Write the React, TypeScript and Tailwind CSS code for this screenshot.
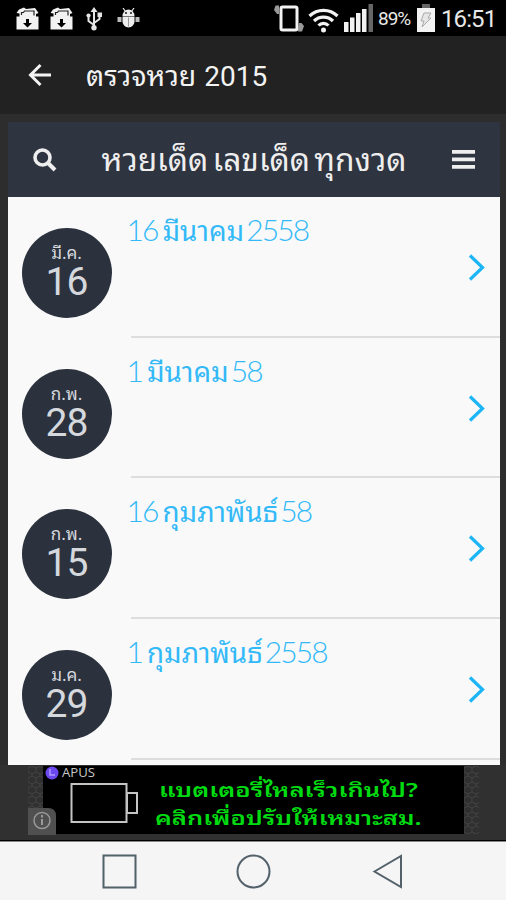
const draws = [
  { month: "มี.ค.", day: "16", before: "16", name: "มีนาคม", year: "2558" },
  { month: "ก.พ.", day: "28", before: "1", name: "มีนาคม", year: "58" },
  { month: "ก.พ.", day: "15", before: "16", name: "กุมภาพันธ์", year: "58" },
  { month: "ม.ค.", day: "29", before: "1", name: "กุมภาพันธ์", year: "2558" },
];

function BoxIcon() {
  return (
    <svg width="23" height="24" viewBox="0 0 23 24" fill="#f2f2f2">
      <path d="M.5 6 3 2.500 8 .500l2 1.500 9-1 3.500 5-2.500 1v3H3.500V6.500z" />
      <path d="M5.500 8V5.500h2l1-1.500h9.500v4.500" fill="none" stroke="#222" strokeWidth="1.200" />
      <path d="M.5 9.500h22v13H.5z" />
      <path d="M10 12h3v4h3l-4.500 4.500L7 16h3z" fill="#000" />
    </svg>
  );
}

function UsbIcon() {
  return (
    <svg width="16" height="24" viewBox="0 0 16 24" fill="none" stroke="#e6e6e6" strokeWidth="2">
      <path d="M8 4v16M8 18 2.500 14V9M8 16l5.500-4V8" />
      <path d="m8 0 3.500 5h-7z" fill="#e6e6e6" stroke="none" />
      <circle cx="8" cy="20.800" r="2.700" fill="#e6e6e6" stroke="none" />
      <circle cx="2.500" cy="8.500" r="2.100" fill="#e6e6e6" stroke="none" />
      <path d="M11.500 5.500H16V10h-4.500z" fill="#e6e6e6" stroke="none" />
    </svg>
  );
}

function DebugIcon() {
  return (
    <svg width="23" height="20" viewBox="0 0 23 20" fill="#eee">
      <path d="M5.500 8a6 6.500 0 0 1 12 0z" />
      <path d="m6 0 2.500 3.500M17 0l-2.500 3.500" stroke="#eee" strokeWidth="1.200" />
      <path d="M5.500 8.500h12v5c0 3-3 6-6 6s-6-3-6-6z" />
      <path d="M.5 9h4v5h-4zM18.500 9h4v5h-4z" fill="#bbb" />
      <path d="M11.500 9.500v9" stroke="#999" strokeWidth="1" />
      <circle cx="9" cy="5" r=".9" fill="#000" />
      <circle cx="14" cy="5" r=".9" fill="#000" />
    </svg>
  );
}

function StatusBar() {
  return (
    <div className="flex h-9 items-start justify-between bg-black text-[#e8e8e8]">
      <div className="flex pl-4 pt-[7px]">
        <BoxIcon />
        <div className="ml-[11px]">
          <BoxIcon />
        </div>
        <div className="ml-[13px]">
          <UsbIcon />
        </div>
        <div className="ml-[15px] pt-px">
          <DebugIcon />
        </div>
      </div>
      <div className="flex pr-[10px] pt-1">
        <svg width="30" height="29" viewBox="0 0 30 29" fill="none">
          <path d="M5 1.500H1.500L0 6l3 4h2zM25 19h2.500L30 22l-2 5.500h-4z" fill="#999" />
          <rect x="7" y="3" width="16" height="23" rx="1.500" fill="#000" stroke="#f2f2f2" strokeWidth="3" />
        </svg>
        <svg width="31" height="26" viewBox="0 0 31 26" fill="none" stroke="#f2f2f2" strokeWidth="3.200" className="ml-[4px] mt-[3px]">
          <path d="M1.500 9a20 20 0 0 1 28 0M6 14a13.500 13.500 0 0 1 19 0M10.500 18.500a7 7 0 0 1 10 0" />
          <circle cx="15.500" cy="23" r="2.500" fill="#f2f2f2" stroke="none" />
        </svg>
        <svg width="29" height="28" viewBox="0 0 29 28" fill="#f2f2f2" className="ml-[5px]">
          <path d="M0 18h4.500v10H0zM6 13.500h4.500V28H6zM12 9h4.500v19H12zM18 5h4.500v23H18z" />
          <path d="M24.500 0H29v28h-4.500z" fill="#666" />
        </svg>
        <span className="ml-[5px] mt-[3px] w-[33px] whitespace-nowrap font-[Roboto] text-[19px] leading-[24px] tracking-[-1px]">
          89%
        </span>
        <svg width="18" height="28" viewBox="0 0 18 28" className="ml-[6px]">
          <path d="M5 0h8v4H5z" fill="#666" />
          <path d="M0 4h18v24H0z" fill="#f2f2f2" />
          <path d="M7 9h7l-3 5h3l-9 9 2-6H4z" fill="#e6e6e6" stroke="#aaa" strokeWidth="1" />
        </svg>
        <span className="ml-[6px] w-[55px] whitespace-nowrap font-[Roboto] text-[24px] leading-[31px] tracking-[-0.9px]">
          16:51
        </span>
      </div>
    </div>
  );
}

function TitleBar() {
  return (
    <div className="flex h-[78px] items-center bg-[#222222] text-[#f3f3f3]">
      <svg width="24" height="24" viewBox="0 0 24 24" fill="none" stroke="#f3f3f3" strokeWidth="3" className="ml-7">
        <path d="M12.500 2 2.500 12l10 10M3 12h20" />
      </svg>
      <h1 className="ml-[34px] flex items-baseline gap-2 whitespace-nowrap text-[28px] leading-9">
        <span className="font-['Noto_Sans_Thai_Looped','Droid_Sans_Thai','Loma',sans-serif] text-[28.400px]">ตรวจหวย</span>
        <span className="font-[Roboto]">2015</span>
      </h1>
    </div>
  );
}

function DrawRow({ draw }: { draw: (typeof draws)[number] }) {
  return (
    <li className="flex h-[140.700px] shrink-0 pl-[14px]">
      <div className="mt-[31px] flex size-[90px] shrink-0 flex-col items-center rounded-full bg-[#2b323e] text-[#d5d8dd]">
        <span className="mt-[13px] whitespace-nowrap font-['Noto_Sans_Thai_Looped','Droid_Sans_Thai','Loma',sans-serif] text-[17px] leading-[22px]">
          {draw.month}
        </span>
        <span className="mt-px font-[Roboto] text-[39px] leading-[36px] tracking-[-0.900px]">{draw.day}</span>
      </div>
      <div className="ml-[19px] flex flex-1 border-b-2 border-[#dddddd]">
        <p className="-ml-[4px] mt-[12px] flex h-10 items-baseline whitespace-nowrap text-[30px] leading-10 text-[#33b9f8]">
          <span className="font-[Lato] font-light tracking-[-1.900px]">{draw.before}</span>
          <span className="ml-[5px] font-['Noto_Sans_Thai_Looped','Droid_Sans_Thai','Loma',sans-serif] text-[27.700px]">{draw.name}</span>
          <span className="ml-[2px] font-[Lato] font-light tracking-[-1.900px]">{draw.year}</span>
        </p>
        <svg width="17" height="27" viewBox="0 0 17 27" fill="none" stroke="#1cb5f5" strokeWidth="3.200" className="ml-auto mr-[15px] mt-[57px]">
          <path d="m2 1.500 12.500 12L2 25.500" />
        </svg>
      </div>
    </li>
  );
}

function Mesh() {
  return (
    <svg width="15" height="68" className="shrink-0">
      <pattern id="mesh" width="8" height="10" patternUnits="userSpaceOnUse">
        <path d="M0 2 4 0l4 2v4L4 8 0 6zM4 8v2" fill="none" stroke="#424242" />
      </pattern>
      <rect width="15" height="68" fill="url(#mesh)" />
    </svg>
  );
}

function AdBanner() {
  return (
    <div className="relative flex h-[76px] border-b border-black bg-[#303030] pl-7 pt-px">
      <Mesh />
      <div className="flex h-[68px] w-[421px] shrink-0 bg-black">
        <svg width="108" height="68" viewBox="0 0 108 68" fill="none" className="overflow-visible">
          <circle cx="9" cy="7" r="6.500" fill="#6c49ee" />
          <path d="M7 3v6h5" stroke="#ad9bff" strokeWidth="1.500" />
          <path d="M28.500 18h55v38h-55zM84 27h10v20H84z" stroke="#c4c4c4" strokeWidth="2" />
          <text x="19" y="11" fill="#c8c8c8" fontFamily="Open Sans" fontSize="12" textLength="33" lengthAdjust="spacingAndGlyphs">
            APUS
          </text>
        </svg>
        <div className="flex flex-col items-start pt-[9px] font-['Noto_Sans_Thai_Looped','Droid_Sans_Thai','Loma',sans-serif] text-[19px] font-semibold leading-[28px] text-[#00db12]">
          <span className="ml-2 origin-left scale-x-[1.350] whitespace-nowrap">แบตเตอรี่ไหลเร็วเกินไป?</span>
          <span className="ml-1 origin-left scale-x-[1.345] whitespace-nowrap">คลิกเพื่อปรับให้เหมาะสม.</span>
        </div>
      </div>
      <Mesh />
      <svg width="28" height="27" viewBox="0 0 28 27" fill="none" className="absolute left-7 top-[43px]">
        <path d="M0 0h20q8 0 8 8v19H0z" fill="#505050" />
        <circle cx="14" cy="12.500" r="8" stroke="#999" strokeWidth="1.500" />
        <path d="M14 7v2.500M14 11v6" stroke="#999" strokeWidth="2" />
      </svg>
    </div>
  );
}

function NavBar() {
  return (
    <div className="flex flex-1 items-center border-t border-[#888888] bg-[#f5f5f5]">
      <svg width="506" height="58" fill="none" stroke="#53616b" strokeWidth="2">
        <path d="M103.500 13.500h32v32h-32z" />
        <circle cx="253.500" cy="29.500" r="16" />
        <path d="M374.500 29.500 401 14v31z" />
      </svg>
    </div>
  );
}

export default function App() {
  return (
    <div className="flex h-[900px] w-[506px] flex-col overflow-hidden bg-[#2d2d2d]">
      <StatusBar />
      <TitleBar />
      <main className="mx-[7.500px] mt-2 flex h-[643px] w-[492px] flex-col overflow-hidden bg-[#f9f9f9]">
        <header className="flex h-[75px] shrink-0 items-center bg-[#2e3440] text-[#eeeeee]">
          <svg width="25" height="25" viewBox="0 0 25 25" fill="none" stroke="#eeeeee" strokeWidth="3.600" className="ml-6">
            <circle cx="10.500" cy="10.500" r="7.500" />
            <path d="m16 16 7 7" strokeWidth="4" />
          </svg>
          <h2 className="ml-[45px] w-[305px] whitespace-nowrap pb-1.5 font-['Noto_Sans_Thai_Looped','Droid_Sans_Thai','Loma',sans-serif] text-[31.700px] leading-[46px] [word-spacing:-4px]">
            หวยเด็ด เลขเด็ด ทุกงวด
          </h2>
          <svg width="23" height="19" className="ml-[45px]" fill="#eeeeee">
            <path d="M0 0h23v3.800H0zM0 7.500h23v3.800H0zM0 15h23v3.800H0z" />
          </svg>
        </header>
        <ul className="flex flex-col">
          {draws.map((draw) => (
            <DrawRow key={draw.before + draw.name + draw.year} draw={draw} />
          ))}
        </ul>
      </main>
      <AdBanner />
      <NavBar />
    </div>
  );
}
